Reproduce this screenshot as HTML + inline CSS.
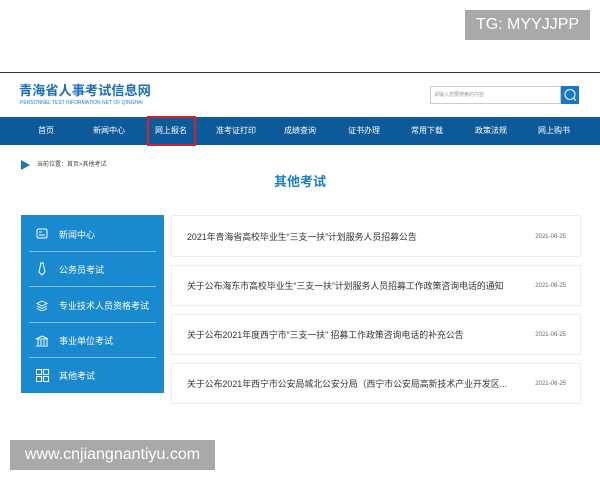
<!DOCTYPE html>
<html><head><meta charset="utf-8"><style>
*{margin:0;padding:0;box-sizing:border-box}
body{width:600px;height:480px;background:#fff;position:relative;overflow:hidden;font-family:"Liberation Sans","Noto Sans CJK SC",sans-serif}
.a{position:absolute}
.nav span{position:absolute;top:0;line-height:28px;font-size:8px;color:#fff;transform:translateX(-50%);white-space:nowrap}
.side div.t{position:absolute;left:38px;font-size:9px;line-height:10px;color:#fff}
.side .ln{position:absolute;left:8px;width:127px;height:1px;background:#7fc0ea}
.card{position:absolute;left:171px;width:410px;border:1px solid #ececec;background:#fff}
.card .t{position:absolute;left:15px;font-size:8.9px;line-height:10px;color:#333;white-space:nowrap}
.card .d{position:absolute;right:14px;font-size:6px;line-height:8px;color:#666}
</style></head><body>
<div class="a" style="left:465px;top:10px;width:125px;height:30px;background:#a9a9a9;color:#fff;font-size:16px;line-height:30px;text-align:center">TG: MYYJJPP</div>
<div class="a" style="left:0;top:72px;width:600px;height:1px;background:#333"></div>
<div class="a" style="left:19px;top:83px;font-size:13.2px;line-height:16px;font-weight:bold;color:#1a6fb8">青海省人事考试信息网</div>
<div class="a" style="left:20px;top:100px;font-size:5px;line-height:6px;color:#2a7fc4;white-space:nowrap">PERSONNEL TEST INFORMATION NET OF QINGHAI</div>
<div class="a" style="left:430px;top:86px;width:131px;height:18px;border:1px solid #ccc;font-size:5px;color:#999;line-height:16px;padding-left:3px">请输入您要搜索的内容</div>
<div class="a" style="left:561px;top:86px;width:18px;height:18px;background:#1a78c2"><svg width="18" height="18"><circle cx="9" cy="8.5" r="5" fill="none" stroke="#fff" stroke-width="1"/><line x1="12.5" y1="12" x2="15" y2="14.5" stroke="#fff"/></svg></div>
<div class="a nav" style="left:0;top:117px;width:600px;height:28px;background:#0d5a9b">
<span style="left:46px">首页</span><span style="left:109px">新闻中心</span><span style="left:171px">网上报名</span><span style="left:236px">准考证打印</span><span style="left:300px">成绩查询</span><span style="left:364px">证书办理</span><span style="left:427px">常用下载</span><span style="left:491px">政策法规</span><span style="left:554px">网上购书</span>
</div>
<div class="a" style="left:147px;top:116px;width:49px;height:30px;border:2.5px solid #d9202a"></div>
<div class="a" style="left:21px;top:160px;width:0;height:0;border-top:5px solid transparent;border-bottom:5px solid transparent;border-left:9px solid #1a78c2"></div>
<div class="a" style="left:37px;top:161px;font-size:6px;line-height:8px;color:#444">当前位置：首页&gt;其他考试</div>
<div class="a" style="left:0;top:174px;width:600px;text-align:center;font-size:13px;line-height:16px;font-weight:bold;color:#1a7fc4">其他考试</div>
<div class="a side" style="left:21px;top:215px;width:143px;height:178px;background:#1a8ad0">
<svg class="a" style="left:15px;top:13px" width="12" height="11"><rect x="1" y="1" width="10" height="9" rx="1.5" fill="none" stroke="#fff"/><line x1="3" y1="4" x2="6" y2="4" stroke="#fff"/><line x1="3" y1="7" x2="9" y2="7" stroke="#fff"/></svg>
<div class="t" style="top:15px">新闻中心</div><div class="ln" style="top:36px"></div>
<svg class="a" style="left:16px;top:47px" width="10" height="14"><path d="M3 1h4M4 1l-2 9 3 3 3-3-2-9" fill="none" stroke="#fff"/></svg>
<div class="t" style="top:50px">公务员考试</div><div class="ln" style="top:71px"></div>
<svg class="a" style="left:15px;top:85px" width="12" height="11"><path d="M6 1l5 2.5-5 2.5-5-2.5zM1 6l5 2.5 5-2.5M1 8.5l5 2.5 5-2.5" fill="none" stroke="#fff" stroke-width=".9"/></svg>
<div class="t" style="top:86px">专业技术人员资格考试</div><div class="ln" style="top:107px"></div>
<svg class="a" style="left:14px;top:120px" width="14" height="12"><path d="M1 4l6-3 6 3zM3 5v5M6 5v5M9 5v5M12 5v5M1 11h12" fill="none" stroke="#fff"/></svg>
<div class="t" style="top:121px">事业单位考试</div><div class="ln" style="top:142px"></div>
<svg class="a" style="left:15px;top:154px" width="13" height="13"><rect x=".5" y=".5" width="5" height="5" fill="none" stroke="#fff"/><rect x="7.5" y=".5" width="5" height="5" fill="none" stroke="#fff"/><rect x=".5" y="7.5" width="5" height="5" fill="none" stroke="#fff"/><rect x="7.5" y="7.5" width="5" height="5" fill="none" stroke="#fff"/></svg>
<div class="t" style="top:156px">其他考试</div>
</div>
<div class="card" style="top:215px;height:42px"><div class="t" style="top:16px">2021年青海省高校毕业生“三支一扶”计划服务人员招募公告</div><div class="d" style="top:17px">2021-06-25</div></div>
<div class="card" style="top:265px;height:41px"><div class="t" style="top:15px">关于公布海东市高校毕业生“三支一扶”计划服务人员招募工作政策咨询电话的通知</div><div class="d" style="top:16px">2021-06-25</div></div>
<div class="card" style="top:314px;height:41px"><div class="t" style="top:15px">关于公布2021年度西宁市“三支一扶” 招募工作政策咨询电话的补充公告</div><div class="d" style="top:16px">2021-06-25</div></div>
<div class="card" style="top:363px;height:41px"><div class="t" style="top:15px">关于公布2021年西宁市公安局城北公安分局（西宁市公安局高新技术产业开发区...</div><div class="d" style="top:16px">2021-06-25</div></div>
<div class="a" style="left:10px;top:440px;width:205px;height:30px;background:#a9a9a9;color:#fff;font-size:16px;line-height:30px;text-align:center">www.cnjiangnantiyu.com</div>
</body></html>
